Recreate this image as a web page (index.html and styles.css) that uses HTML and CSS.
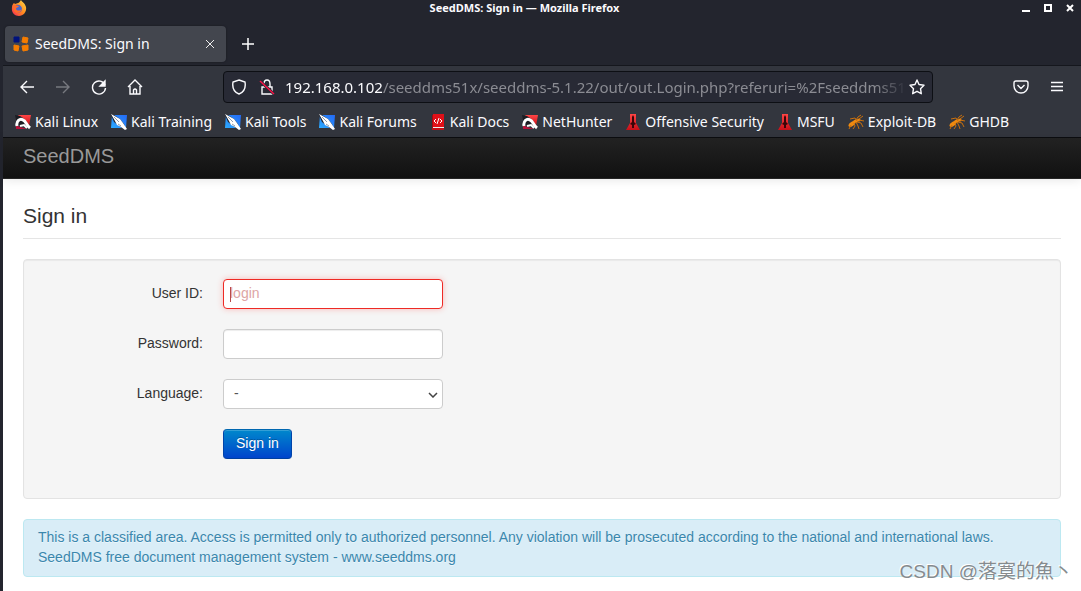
FILE: index.html
```html
<!DOCTYPE html>
<html lang="en">
<head>
<meta charset="utf-8">
<meta name="viewport" content="width=device-width, initial-scale=1">
<title>SeedDMS: Sign in</title>
<link rel="stylesheet" href="styles.css">
</head>
<body>
<svg class="defs" aria-hidden="true">
  <defs>
    <linearGradient id="blue" x1="1" y1="0" x2="0" y2="1"><stop offset="0" stop-color="#2468f5"/><stop offset="1" stop-color="#2cabff"/></linearGradient>
    <linearGradient id="flame" x1="1" y1="0" x2="0" y2="1"><stop offset="0" stop-color="#ffe04a"/><stop offset=".5" stop-color="#ff8a1f"/><stop offset="1" stop-color="#f5235d"/></linearGradient>
    <linearGradient id="redfade" x1="0" y1="0" x2="0" y2="1"><stop offset="0" stop-color="#ff4545"/><stop offset="1" stop-color="#c80f18"/></linearGradient>
    <symbol id="dragon" viewBox="0 0 16 16">
      <path d="M3 1h13l-2 11-3-5-6-3z" fill="url(#redfade)"/>
      <path d="M0 1l5 1 3 2 3 3 3 5 1 3-4-3-6-1-4 1V6z" fill="#1b1c22"/>
      <path d="M1 11l4 2 4 1 3 1H1z" fill="#b8123a"/>
      <path d="M2 12C1 7 5 4 8 6c3 1 3 5 7 8" fill="none" stroke="#fff" stroke-width="3"/>
      <path d="M5 12l4-1 3 3" fill="none" stroke="#fff" stroke-width="2"/>
    </symbol>
    <symbol id="knife" viewBox="0 0 16 16">
      <path d="M1 1h15l-1 13H0z" fill="url(#blue)"/>
      <path d="M0 1l3 0 6 4 4 5 2 5-4-1-8-6z" fill="#20242e"/>
      <path d="M0 0l9 5 3 4 4 6-2 1-4-3-4-2-2-4z" fill="#fff"/>
      <path d="M3 3l5 5M7 10l3 2" stroke="#8e9aac" stroke-width="1"/>
    </symbol>
    <symbol id="book" viewBox="0 0 12 16">
      <path d="M1 0h11v13H1z" fill="#e01018"/><path d="M0 1h1v14H0z" fill="#a00a12"/><path d="M1 13h11v1H1z" fill="#eee"/><path d="M0 14h12v2H0z" fill="#c20d15"/>
      <path d="M4 5L2 7l2 2m4-4l2 2-2 2M7 4L5 10" fill="none" stroke="#fff" stroke-width="1"/>
    </symbol>
    <symbol id="tower" viewBox="0 0 14 16">
      <path d="M4 0h6v9l4 7H0l4-7z" fill="url(#redfade)"/>
      <path d="M7 1l1 2v5l2 2-2 1v3H6v-3l-2-1 2-2V3z" fill="#3a0508"/>
    </symbol>
    <symbol id="bug" viewBox="0 0 16 16">
      <g fill="#ef8a10"><ellipse cx="4" cy="10" rx="4" ry="2" transform="rotate(-35 4 10)"/><ellipse cx="8" cy="7" rx="3" ry="1.500" transform="rotate(-20 8 7)"/><circle cx="11" cy="6" r="1.500"/></g>
      <path d="M2 5l5-1 2 3M8 6l2-3 3-2M11 5l4-3M11 6l5 1M9 8l4 1 2 4M8 8l2 4 1 3M6 9l1 3-2 3M3 11l-2 4" stroke="#c9700e" stroke-width="1" fill="none"/>
    </symbol>
  </defs>
</svg>

<div class="window">
  <header class="titlebar">
    <svg class="fox" viewBox="0 0 16 16" aria-hidden="true">
      <path d="M10 0c1 2 4 3 5 7 1 5-3 9-7 9S0 13 1 7c0-2 1-3 2-4l1 1 3-1c1 0 2-2 3-3z" fill="url(#flame)"/>
      <path d="M5 5c3-1 6 1 6 4s-3 4-5 3S3 8 5 5z" fill="#4b67c8"/>
      <path d="M3 5c2 0 3 1 5 1-1 2-3 1-3 3 1 2 4 2 6 0-1 4-6 5-8 2-1-2-1-4 0-6z" fill="#ff6b2b"/>
    </svg>
    <span class="window-title">SeedDMS: Sign in — Mozilla Firefox</span>
    <div class="window-buttons">
      <button class="plain" aria-label="Minimize"><svg width="8" height="8"><path d="M0 7h8" stroke="#fff" stroke-width="2"/></svg></button>
      <button class="plain" aria-label="Maximize"><svg width="8" height="8"><path d="M1 1h6v6H1z" fill="none" stroke="#fff" stroke-width="2"/></svg></button>
      <button class="plain" aria-label="Close"><svg width="8" height="8"><path d="M1 1l6 6M7 1L1 7" stroke="#fff" stroke-width="2"/></svg></button>
    </div>
  </header>

  <div class="tabstrip">
    <div class="tab">
      <svg class="icon" viewBox="0 0 16 16" aria-hidden="true"><path d="M1 1h5v5H1z" fill="#00127d" stroke="#00127d"/><path d="M10 1l5 1-1 5-5-1zM1 9l5 1-1 5-4-1zM9 10l6-1v5l-5 1z" fill="#f57c00" stroke="#f57c00" stroke-linejoin="round"/></svg>
      <span class="tab-title">SeedDMS: Sign in</span>
      <button class="plain" aria-label="Close tab"><svg width="8" height="8" fill="none" stroke="#eee"><path d="M0 0l8 8M8 0L0 8"/></svg></button>
    </div>
    <button class="plain" aria-label="New tab"><svg width="12" height="12" fill="none" stroke="#fff"><path d="M6 0v12M0 6h12" stroke-width="1.5"/></svg></button>
  </div>

  <nav class="toolbar" aria-label="Browser navigation">
    <div class="history">
      <button class="plain" aria-label="Back"><svg class="icon line" viewBox="0 0 16 16"><path d="M15 8H2m6-6L2 8l6 6"/></svg></button>
      <button class="plain dim" aria-label="Forward"><svg class="icon line" viewBox="0 0 16 16"><path d="M1 8h13M8 2l6 6-6 6"/></svg></button>
      <button class="plain" aria-label="Reload"><svg class="icon line" viewBox="0 0 16 16"><path d="M14 6A6.5 6.5 0 1 0 14.500 9"/><path d="M14 2v5H9z" fill="currentColor"/></svg></button>
      <button class="plain" aria-label="Home"><svg class="icon line" viewBox="0 0 16 16"><path d="M1 8l7-7 7 7M3 7v8h10V7M6.500 15v-4q1.500-2 3 0v4"/></svg></button>
    </div>
    <div class="urlbar">
      <svg class="icon line" viewBox="0 0 16 16" aria-hidden="true"><path d="M8 1l6 2c1 6-1 10-6 12C3 13 1 9 2 3z"/></svg>
      <svg class="icon line lock" viewBox="0 0 16 16" aria-hidden="true"><path d="M3 8h10v7H3zM5 8V5q0-4 3-4t3 4v3"/><path d="M1 2l14 13" stroke="#282a35" stroke-width="3"/><path d="M1 2l14 13" stroke="#ff0f45"/></svg>
      <span class="url"><b>192.168.0.102</b>/seeddms51x/seeddms-5.1.22/out/out.Login.php?referuri=%2Fseeddms51x</span>
      <button class="plain" aria-label="Bookmark this page"><svg class="icon line" viewBox="0 0 16 16"><path stroke-linejoin="round" d="M8 1l2 4.500 5 .7-3.500 3.500.8 5L8 12.300l-4.300 2.400.8-5L1 6.200l5-.7z"/></svg></button>
    </div>
    <div class="tools">
      <button class="plain" aria-label="Save to Pocket"><svg class="icon line" viewBox="0 0 16 16"><path d="M3 2h10q2 0 2 2v3a7 7 0 0 1-14 0V4q0-2 2-2zM4.500 6L8 9.500 11.500 6"/></svg></button>
      <button class="plain" aria-label="Open menu"><svg class="icon line" viewBox="0 0 16 16"><path d="M2 3.500h12M2 7.500h12M2 11.500h12"/></svg></button>
    </div>
  </nav>

  <nav class="bookmarks" aria-label="Bookmarks">
    <a href="#"><svg class="icon"><use href="#dragon"/></svg>Kali Linux</a>
    <a href="#"><svg class="icon"><use href="#knife"/></svg>Kali Training</a>
    <a href="#"><svg class="icon"><use href="#knife"/></svg>Kali Tools</a>
    <a href="#"><svg class="icon"><use href="#knife"/></svg>Kali Forums</a>
    <a href="#"><svg class="icon"><use href="#book"/></svg>Kali Docs</a>
    <a href="#"><svg class="icon"><use href="#dragon"/></svg>NetHunter</a>
    <a href="#"><svg class="icon"><use href="#tower"/></svg>Offensive Security</a>
    <a href="#"><svg class="icon"><use href="#tower"/></svg>MSFU</a>
    <a href="#"><svg class="icon"><use href="#bug"/></svg>Exploit-DB</a>
    <a href="#"><svg class="icon"><use href="#bug"/></svg>GHDB</a>
  </nav>

  <div class="page">
    <header class="navbar"><a class="brand" href="#">SeedDMS</a></header>
    <main class="content">
      <h1 class="heading">Sign in</h1>
      <form class="well">
        <div class="row">
          <label for="login">User ID:</label>
          <div class="control"><input class="field invalid" id="login" type="text" placeholder="login"><span class="caret"></span></div>
        </div>
        <div class="row">
          <label for="pwd">Password:</label>
          <div class="control"><input class="field" id="pwd" type="password"></div>
        </div>
        <div class="row">
          <label for="lang">Language:</label>
          <div class="control">
            <select class="field" id="lang"><option>-</option></select>
            <svg class="chevron" viewBox="0 0 10 6" aria-hidden="true"><path d="M1 1l4 4 4-4" fill="none" stroke="#444" stroke-width="1.500"/></svg>
          </div>
        </div>
        <div class="row actions"><button class="submit" type="button">Sign in</button></div>
      </form>
      <div class="notice">
        <p>This is a classified area. Access is permitted only to authorized personnel. Any violation will be prosecuted according to the national and international laws.</p>
        <p>SeedDMS free document management system - www.seeddms.org</p>
      </div>
    </main>
  </div>
</div>
<div class="watermark">CSDN @落寞的魚丶</div>
</body>
</html>
```
FILE: styles.css
```css
* { box-sizing: border-box; }
body { margin: 0; background: #23252e; }
p { margin: 0; }
.defs { position: absolute; width: 0; height: 0; }
.window {
  display: flex;
  flex-direction: column;
  min-height: 100vh;
  color: #fbfbfe;
  font: 14px/20px "Noto Sans", sans-serif;
}
.plain {
  display: flex;
  padding: 0;
  border: 0;
  background: none;
  color: inherit;
}
.icon { flex: none; width: 16px; height: 16px; }
.line { fill: none; stroke: currentColor; stroke-width: 1.4; }
.dim { color: #77797f; }

.titlebar {
  display: grid;
  grid-template-columns: 1fr auto 1fr;
  align-items: center;
  height: 18px;
  padding: 0 7px 2px 11px;
}
.fox { width: 16px; height: 16px; }
.window-title { padding-right: 36px; font-size: 11px; font-weight: 700; line-height: 16px; }
.window-buttons { display: flex; justify-content: flex-end; gap: 14px; }

.tabstrip {
  display: flex;
  align-items: center;
  gap: 16px;
  height: 47px;
  padding: 5px 5px 0;
}
.tab {
  display: flex;
  align-items: center;
  gap: 6px;
  width: 221px;
  height: 36px;
  padding: 0 12px 0 8px;
  border-radius: 4px;
  background: #43464e;
  box-shadow: 0 0 2px #17181e;
}
.tab-title { flex: 1; }

.toolbar {
  display: flex;
  align-items: center;
  height: 42px;
  margin-left: 3px;
  padding: 0 16px;
  border-top: 1px solid #15171d;
  background: #33363e;
}
.history { display: flex; flex: none; gap: 20px; width: 204px; }
.urlbar {
  display: flex;
  flex: 1;
  align-items: center;
  gap: 10px;
  min-width: 0;
  height: 32px;
  padding: 0 7px;
  border: 1px solid #0d0f14;
  border-radius: 4px;
  background: #282a35;
}
.lock { margin-left: 2px; }
.url {
  flex: 1;
  min-width: 0;
  margin-right: -8px;
  overflow: hidden;
  white-space: nowrap;
  color: #8b8c93;
  font-size: 15px;
  -webkit-mask-image: linear-gradient(to left, transparent, #000 32px);
  mask-image: linear-gradient(to left, transparent, #000 32px);
}
.url b { font-weight: 400; color: #fbfbfe; }
.tools { display: flex; flex: none; justify-content: flex-end; gap: 20px; width: 132px; }

.bookmarks {
  display: flex;
  align-items: center;
  gap: 13px;
  height: 31px;
  margin-left: 3px;
  padding: 0 12px;
  border-bottom: 1px solid #0c0d10;
  background: #33363e;
}
.bookmarks a {
  display: flex;
  align-items: center;
  gap: 4px;
  color: inherit;
  text-decoration: none;
  white-space: nowrap;
}

.page {
  flex: 1;
  margin-left: 3px;
  background: #fff;
  color: #333;
  font: 14px/20px "Liberation Sans", Arial, sans-serif;
}
.navbar {
  height: 41px;
  padding: 8px 20px;
  border-bottom: 1px solid #252525;
  background: linear-gradient(#222, #111);
  box-shadow: 0 1px 10px rgba(0, 0, 0, .1);
}
.brand { color: #999; font-size: 20px; text-decoration: none; }
.content { padding: 17px 20px 14px; }
.heading {
  margin: 0 0 20px;
  padding-bottom: 2px;
  border-bottom: 1px solid #e5e5e5;
  font-size: 21px;
  font-weight: 400;
  line-height: 40px;
}
.well {
  display: flex;
  flex-direction: column;
  gap: 20px;
  margin-bottom: 20px;
  padding: 19px 19px 39px;
  border: 1px solid #e3e3e3;
  border-radius: 4px;
  background: #f5f5f5;
  box-shadow: inset 0 1px 1px rgba(0, 0, 0, .05);
}
.row { display: flex; gap: 20px; }
.row label { width: 160px; padding-top: 4px; text-align: right; }
.control { position: relative; width: 220px; }
.field {
  display: block;
  width: 100%;
  height: 30px;
  padding: 3px 6px 5px;
  border: 1px solid #ccc;
  border-radius: 4px;
  outline: 0;
  background: #fff;
  box-shadow: inset 0 1px 1px rgba(0, 0, 0, .075);
  color: #555;
  font: inherit;
  appearance: none;
}
select.field { padding-left: 10px; box-shadow: none; }
.invalid { border-color: #ee2a25; box-shadow: 0 0 6px #f8b9b7; }
.invalid::placeholder { color: #dda5a5; opacity: 1; }
.caret { position: absolute; top: 8px; left: 7px; width: 1px; height: 15px; background: #b94a48; }
.chevron { position: absolute; top: 13px; right: 5px; width: 10px; height: 6px; pointer-events: none; }
.actions { padding: 0 0 0 180px; }
.submit {
  height: 30px;
  padding: 3px 12px 5px;
  border: 1px solid #04a;
  border-color: #0067b0 #04a #003fa0;
  border-radius: 4px;
  background: linear-gradient(#08c, #04c);
  box-shadow: inset 0 1px 0 rgba(255, 255, 255, .2);
  color: #fff;
  font: inherit;
  text-shadow: 0 -1px 0 rgba(0, 0, 0, .25);
}
.notice {
  padding: 7px 14px 9px;
  border: 1px solid #bce8f1;
  border-radius: 4px;
  background: #d9edf7;
  color: #3a87ad;
  text-shadow: 0 1px 0 rgba(255, 255, 255, .5);
}
.watermark {
  position: absolute;
  right: 8px;
  bottom: 5px;
  color: #868b8e;
  font: 19px/28px "Liberation Sans", "Noto Sans CJK SC", sans-serif;
  text-shadow: -1px -1px 0 #fff;
  white-space: nowrap;
}
```
